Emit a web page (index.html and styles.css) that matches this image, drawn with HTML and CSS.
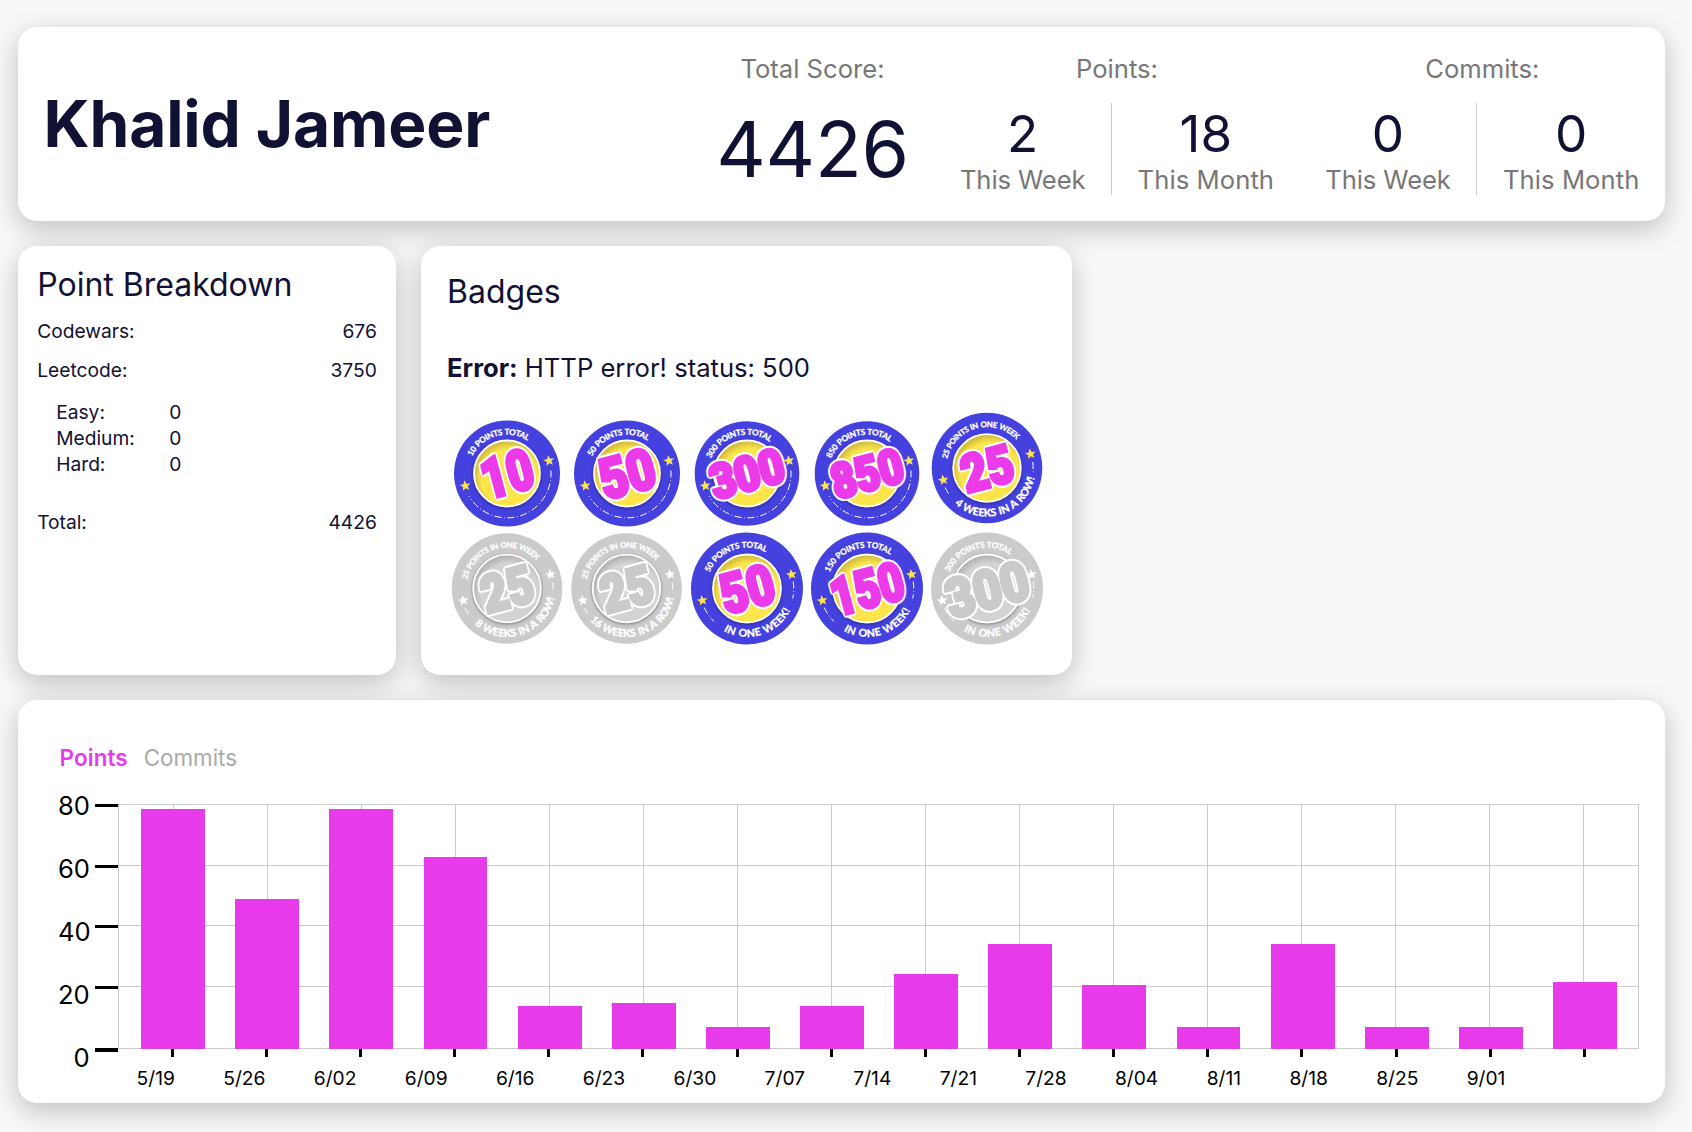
FILE: index.html
```
<!DOCTYPE html>
<html lang="en">
<head>
<meta charset="utf-8">
<title>Khalid Jameer</title>
<link rel="stylesheet" href="styles.css">
</head>
<body>
<svg class="defs" width="0" height="0" aria-hidden="true">
  <defs>
    <path id="arc-top" d="M-38.8 0A38.8 38.8 0 0 1 38.8 0"/>
    <path id="arc-top-lg" d="M-40.8 0A40.8 40.8 0 0 1 40.8 0"/>
    <path id="arc-bottom" d="M-48.5 0A48.5 48.5 0 0 0 48.5 0"/>
    <path id="star" d="M0 -5.6L1.5 -1.8L5.4 -1.7L2.3 .8L3.3 4.5L0 2.4L-3.3 4.5L-2.3 .8L-5.4 -1.7L-1.5 -1.8Z"/>
    <radialGradient id="sun" cx="0.54" cy="0.56" r="0.54">
      <stop offset="0.8" stop-color="#fce54b"/>
      <stop offset="1" stop-color="#d4bd3c"/>
    </radialGradient>
    <radialGradient id="moon" cx="0.54" cy="0.56" r="0.54">
      <stop offset="0.8" stop-color="#d3d3d3"/>
      <stop offset="1" stop-color="#b4b4b4"/>
    </radialGradient>
    <g id="dashes-total"><path d="M43.9 -3A44 44 0 0 1 -38 22.5"/></g>
    <g id="dashes-row"><path d="M45.8 -6A46 46 0 0 1 45.9 4"/><path d="M-42 19.5A46 46 0 0 0 -37 27.5"/></g>
    <g id="dashes-week"><path d="M46.2 -7A46.7 46.7 0 0 1 45.7 10"/><path d="M-42.8 19A46.7 46.7 0 0 0 -33 33"/></g>
  </defs>
</svg>
<main class="dashboard">
  <header class="card summary">
    <h1 class="name">Khalid Jameer</h1>
    <section class="stat">
      <p class="label">Total Score:</p>
      <p class="score">4426</p>
    </section>
    <section class="stat">
      <p class="label">Points:</p>
      <div class="periods">
        <div class="period"><span class="count">2</span><span class="label">This Week</span></div>
        <div class="period"><span class="count">18</span><span class="label">This Month</span></div>
      </div>
    </section>
    <section class="stat">
      <p class="label">Commits:</p>
      <div class="periods">
        <div class="period"><span class="count">0</span><span class="label">This Week</span></div>
        <div class="period"><span class="count">0</span><span class="label">This Month</span></div>
      </div>
    </section>
  </header>

  <div class="middle">
    <section class="card breakdown">
      <h2>Point Breakdown</h2>
      <div class="line"><span>Codewars:</span><span>676</span></div>
      <div class="line"><span>Leetcode:</span><span>3750</span></div>
      <div class="levels">
        <span>Easy:</span><span>0</span>
        <span>Medium:</span><span>0</span>
        <span>Hard:</span><span>0</span>
      </div>
      <div class="line"><span>Total:</span><span>4426</span></div>
    </section>

    <section class="card badges">
      <h2>Badges</h2>
      <p class="error"><strong>Error:</strong> HTTP error! status: 500</p>
      <div class="badge-grid">
        <svg class="badge" viewBox="-60 -57.5 120 115">
          <circle class="disc" r="53"/><circle class="core" r="33"/>
          <text class="ring"><textPath href="#arc-top" startOffset="17.5" textLength="65">10 POINTS TOTAL</textPath></text>
          <use class="star" href="#star" transform="translate(42 -12.7) rotate(-10)"/><use class="star" href="#star" transform="translate(-41.7 12.3) rotate(-10)"/>
          <use class="dashes" href="#dashes-total"/>
          <g transform="rotate(-15)"><text class="num edge" x="-26" y="20" font-size="56" textLength="52" lengthAdjust="spacingAndGlyphs">10</text><text class="num" x="-26" y="20" font-size="56" textLength="52" lengthAdjust="spacingAndGlyphs">10</text></g>
        </svg>
        <svg class="badge" viewBox="-60 -57.5 120 115">
          <circle class="disc" r="53"/><circle class="core" r="33"/>
          <text class="ring"><textPath href="#arc-top" startOffset="17.5" textLength="65">50 POINTS TOTAL</textPath></text>
          <use class="star" href="#star" transform="translate(42 -12.7) rotate(-10)"/><use class="star" href="#star" transform="translate(-41.7 12.3) rotate(-10)"/>
          <use class="dashes" href="#dashes-total"/>
          <g transform="rotate(-15)"><text class="num edge" x="-28" y="20" font-size="56" textLength="56" lengthAdjust="spacingAndGlyphs">50</text><text class="num" x="-28" y="20" font-size="56" textLength="56" lengthAdjust="spacingAndGlyphs">50</text></g>
        </svg>
        <svg class="badge" viewBox="-60 -57.5 120 115">
          <circle class="disc" r="52.3"/><circle class="core" r="33"/>
          <text class="ring"><textPath href="#arc-top" startOffset="15.3" textLength="70">300 POINTS TOTAL</textPath></text>
          <use class="star" href="#star" transform="translate(42 -12.7) rotate(-10)"/><use class="star" href="#star" transform="translate(-41.7 12.3) rotate(-10)"/>
          <use class="dashes" href="#dashes-total"/>
          <g transform="rotate(-15)"><text class="num edge" x="-37.5" y="17" font-size="48" textLength="75" lengthAdjust="spacingAndGlyphs">300</text><text class="num" x="-37.5" y="17" font-size="48" textLength="75" lengthAdjust="spacingAndGlyphs">300</text></g>
        </svg>
        <svg class="badge" viewBox="-60 -57.5 120 115">
          <circle class="disc" r="52.3"/><circle class="core" r="33"/>
          <text class="ring"><textPath href="#arc-top" startOffset="15.3" textLength="70">850 POINTS TOTAL</textPath></text>
          <use class="star" href="#star" transform="translate(42 -12.7) rotate(-10)"/><use class="star" href="#star" transform="translate(-41.7 12.3) rotate(-10)"/>
          <use class="dashes" href="#dashes-total"/>
          <g transform="rotate(-15)"><text class="num edge" x="-36.5" y="17" font-size="48" textLength="73" lengthAdjust="spacingAndGlyphs">850</text><text class="num" x="-36.5" y="17" font-size="48" textLength="73" lengthAdjust="spacingAndGlyphs">850</text></g>
        </svg>
        <svg class="badge" viewBox="-60 -52 120 115">
          <circle class="disc" r="55.3"/><circle class="core" r="33.8"/>
          <text class="ring small"><textPath href="#arc-top-lg" startOffset="9" textLength="88">25 POINTS IN ONE WEEK</textPath></text>
          <text class="ring big"><textPath href="#arc-bottom" startOffset="40.5" textLength="102">4 WEEKS IN A ROW!</textPath></text>
          <use class="star" href="#star" transform="translate(43.5 -14) rotate(-10)"/><use class="star" href="#star" transform="translate(-43.7 12) rotate(-10)"/>
          <use class="dashes" href="#dashes-row"/>
          <g transform="rotate(-15)"><text class="num edge" x="-26" y="19" font-size="52" textLength="52" lengthAdjust="spacingAndGlyphs">25</text><text class="num" x="-26" y="19" font-size="52" textLength="52" lengthAdjust="spacingAndGlyphs">25</text></g>
        </svg>
        <svg class="badge locked" viewBox="-60 -57.5 120 115">
          <circle class="disc" r="55.3"/><circle class="core" r="33.8"/>
          <text class="ring small"><textPath href="#arc-top-lg" startOffset="9" textLength="88">25 POINTS IN ONE WEEK</textPath></text>
          <text class="ring big"><textPath href="#arc-bottom" startOffset="40.5" textLength="102">8 WEEKS IN A ROW!</textPath></text>
          <use class="star" href="#star" transform="translate(43.5 -14) rotate(-10)"/><use class="star" href="#star" transform="translate(-43.7 12) rotate(-10)"/>
          <use class="dashes" href="#dashes-row"/>
          <g transform="rotate(-15)"><text class="num edge" x="-26" y="19" font-size="52" textLength="52" lengthAdjust="spacingAndGlyphs">25</text><text class="num" x="-26" y="19" font-size="52" textLength="52" lengthAdjust="spacingAndGlyphs">25</text></g>
        </svg>
        <svg class="badge locked" viewBox="-59.5 -57.5 120 115">
          <circle class="disc" r="55.3"/><circle class="core" r="33.8"/>
          <text class="ring small"><textPath href="#arc-top-lg" startOffset="9" textLength="88">25 POINTS IN ONE WEEK</textPath></text>
          <text class="ring big"><textPath href="#arc-bottom" startOffset="34.5" textLength="108">16 WEEKS IN A ROW!</textPath></text>
          <use class="star" href="#star" transform="translate(43.5 -14) rotate(-10)"/><use class="star" href="#star" transform="translate(-43.7 12) rotate(-10)"/>
          <use class="dashes" href="#dashes-row"/>
          <g transform="rotate(-15)"><text class="num edge" x="-26" y="19" font-size="52" textLength="52" lengthAdjust="spacingAndGlyphs">25</text><text class="num" x="-26" y="19" font-size="52" textLength="52" lengthAdjust="spacingAndGlyphs">25</text></g>
        </svg>
        <svg class="badge" viewBox="-60 -57.5 120 115">
          <circle class="disc" r="56"/><circle class="core" r="34"/>
          <text class="ring"><textPath href="#arc-top-lg" startOffset="16.5" textLength="67">50 POINTS TOTAL</textPath></text>
          <text class="ring big"><textPath href="#arc-bottom" startOffset="51.5" textLength="78">IN ONE WEEK!</textPath></text>
          <use class="star" href="#star" transform="translate(44.5 -14) rotate(-10)"/><use class="star" href="#star" transform="translate(-44.7 12) rotate(-10)"/>
          <use class="dashes" href="#dashes-week"/>
          <g transform="rotate(-15)"><text class="num edge" x="-27" y="20" font-size="55" textLength="54" lengthAdjust="spacingAndGlyphs">50</text><text class="num" x="-27" y="20" font-size="55" textLength="54" lengthAdjust="spacingAndGlyphs">50</text></g>
        </svg>
        <svg class="badge" viewBox="-60 -57.5 120 115">
          <circle class="disc" r="56"/><circle class="core" r="34"/>
          <text class="ring"><textPath href="#arc-top-lg" startOffset="16.5" textLength="72">150 POINTS TOTAL</textPath></text>
          <text class="ring big"><textPath href="#arc-bottom" startOffset="51.5" textLength="78">IN ONE WEEK!</textPath></text>
          <use class="star" href="#star" transform="translate(44.5 -14) rotate(-10)"/><use class="star" href="#star" transform="translate(-44.7 12) rotate(-10)"/>
          <use class="dashes" href="#dashes-week"/>
          <g transform="rotate(-15)"><text class="num edge" x="-37" y="19" font-size="53" textLength="74" lengthAdjust="spacingAndGlyphs">150</text><text class="num" x="-37" y="19" font-size="53" textLength="74" lengthAdjust="spacingAndGlyphs">150</text></g>
        </svg>
        <svg class="badge locked" viewBox="-60 -57.5 120 115">
          <circle class="disc" r="56"/><circle class="core" r="34"/>
          <text class="ring"><textPath href="#arc-top-lg" startOffset="16.5" textLength="72">300 POINTS TOTAL</textPath></text>
          <text class="ring big"><textPath href="#arc-bottom" startOffset="51.5" textLength="78">IN ONE WEEK!</textPath></text>
          <use class="star" href="#star" transform="translate(44.5 -14) rotate(-10)"/><use class="star" href="#star" transform="translate(-44.7 12) rotate(-10)"/>
          <use class="dashes" href="#dashes-week"/>
          <g transform="rotate(-15)"><text class="num edge" x="-42" y="20" font-size="54" textLength="84" lengthAdjust="spacingAndGlyphs">300</text><text class="num" x="-42" y="20" font-size="54" textLength="84" lengthAdjust="spacingAndGlyphs">300</text></g>
        </svg>
      </div>
    </section>
  </div>

  <section class="card history">
    <nav class="tabs"><span class="tab active">Points</span><span class="tab">Commits</span></nav>
    <div class="chart">
      <div class="y-axis"><span>80</span><span>60</span><span>40</span><span>20</span><span>0</span></div>
      <svg class="plot" width="1544" height="253" viewBox="95 804 1544 253" shape-rendering="crispEdges">
        <path class="grid" d="M118 804.5H1639M118 865.5H1639M118 925.5H1639M118 986.5H1639M118 1048.5H1639M118.5 804V1049M173.5 804V1049M267.5 804V1049M361.5 804V1049M455.5 804V1049M549.5 804V1049M643.5 804V1049M737.5 804V1049M831.5 804V1049M925.5 804V1049M1019.5 804V1049M1113.5 804V1049M1207.5 804V1049M1301.5 804V1049M1395.5 804V1049M1489.5 804V1049M1583.5 804V1049M1638.5 804V1049"/>
        <g class="bars">
          <rect x="141" y="809" width="64" height="240"/><rect x="235" y="899" width="64" height="150"/>
          <rect x="329" y="809" width="64" height="240"/><rect x="424" y="857" width="63" height="192"/>
          <rect x="518" y="1006" width="64" height="43"/><rect x="612" y="1003" width="64" height="46"/>
          <rect x="706" y="1027" width="64" height="22"/><rect x="800" y="1006" width="64" height="43"/>
          <rect x="894" y="974" width="64" height="75"/><rect x="988" y="944" width="64" height="105"/>
          <rect x="1082" y="985" width="64" height="64"/><rect x="1177" y="1027" width="63" height="22"/>
          <rect x="1271" y="944" width="64" height="105"/><rect x="1365" y="1027" width="64" height="22"/>
          <rect x="1459" y="1027" width="64" height="22"/><rect x="1553" y="982" width="64" height="67"/>
        </g>
        <path class="ticks" d="M95 804h23v3h-23zM95 865h23v3h-23zM95 925h23v3h-23zM95 986h23v3h-23zM95 1048h23v4h-23zM171 1049h3v8h-3zM265 1049h3v8h-3zM359 1049h3v8h-3zM453 1049h3v8h-3zM547 1049h3v8h-3zM641 1049h3v8h-3zM736 1049h3v8h-3zM830 1049h3v8h-3zM924 1049h3v8h-3zM1018 1049h3v8h-3zM1112 1049h3v8h-3zM1206 1049h3v8h-3zM1300 1049h3v8h-3zM1395 1049h3v8h-3zM1489 1049h3v8h-3zM1583 1049h3v8h-3z"/>
      </svg>
    </div>
    <div class="x-axis"><span>5/19</span><span>5/26</span><span>6/02</span><span>6/09</span><span>6/16</span><span>6/23</span><span>6/30</span><span>7/07</span><span>7/14</span><span>7/21</span><span>7/28</span><span>8/04</span><span>8/11</span><span>8/18</span><span>8/25</span><span>9/01</span></div>
  </section>
</main>
</body>
</html>
```
FILE: styles.css
```
* { box-sizing: border-box; }
body {
  margin: 0;
  background: #f8f8fb;
  color: #111133;
  font-family: Inter, "Liberation Sans", sans-serif;
}
h1, h2, p { margin: 0; }
.defs { position: absolute; }

.dashboard {
  display: flex;
  flex-direction: column;
  gap: 25px;
  width: 1665px;
  height: 1132px;
  padding: 27px 0 29px 18px;
}
.card {
  background: #fff;
  border-radius: 19.2px;
  box-shadow: 0 8px 28px rgba(0, 0, 0, 0.23);
}

/* summary */
.summary {
  display: flex;
  gap: 51.2px;
  height: 194px;
  padding: 25.6px;
}
.name {
  flex: 1;
  align-self: center;
  margin-top: -2px;
  font-size: 64px;
  line-height: 77px;
  font-weight: 700;
  letter-spacing: -0.15px;
}
.stat {
  display: flex;
  flex-direction: column;
  align-items: center;
  gap: 19px;
}
.label {
  color: #777;
  font-size: 25.6px;
  line-height: 31px;
}
.period:first-child .label { letter-spacing: -0.1px; }
.period:last-child .label { letter-spacing: 0.08px; }
.score {
  font-size: 76.8px;
  line-height: 93px;
  letter-spacing: -0.3px;
}
.periods { display: flex; height: 92px; }
.period {
  display: flex;
  flex-direction: column;
  align-items: center;
}
.period:first-child {
  padding-right: 25.6px;
  border-right: 1px solid #ccc;
}
.period:last-child { padding-left: 25.6px; }
.count {
  font-size: 51.2px;
  line-height: 61px;
}

/* middle row */
.middle {
  display: flex;
  gap: 25px;
  height: 429px;
}
h2 {
  font-size: 32px;
  line-height: 39px;
  font-weight: 400;
}
.breakdown {
  width: 378px;
  padding: 19px 19.2px;
  font-size: 19.2px;
}
.line {
  display: flex;
  justify-content: space-between;
  height: 39px;
  line-height: 23px;
  padding-top: 16px;
}
.levels {
  display: grid;
  grid-template-columns: 113px auto;
  justify-content: start;
  padding: 17px 0 18px 19px;
  line-height: 26px;
}
.badges {
  width: 651px;
  padding: 26px 26px 0;
}
.error {
  margin-top: 41px;
  font-size: 25.6px;
  line-height: 31px;
}
.badge-grid {
  display: grid;
  grid-template-columns: repeat(5, 120px);
  grid-auto-rows: 114.5px;
  margin-top: 33px;
}

/* badges */
.badge { width: 120px; height: 115px; overflow: visible; }
.disc { fill: #4441df; }
.core {
  fill: url(#sun);
  stroke: #fff;
  stroke-width: 1.8px;
  filter: drop-shadow(0 1px 1.5px rgba(0, 0, 0, 0.4));
}
.star { fill: #fce54b; }
.dashes {
  fill: none;
  stroke: #fff;
  stroke-width: 1px;
  stroke-dasharray: 7 2.5 1 2.5;
}
.ring {
  fill: #fff;
  stroke: #fff;
  stroke-width: 0.2px;
  font: 900 8.3px Lato, sans-serif;
  word-spacing: 0.8px;
}
.ring.small { font-size: 7.9px; }
.ring.big { font-size: 10.6px; }
.num {
  fill: #eb3be9;
  stroke: #eb3be9;
  stroke-width: 3.8px;
  font-family: Roboto, sans-serif;
  font-weight: 900;
}
.num.edge {
  stroke: #fff;
  stroke-width: 8px;
  stroke-linejoin: round;
}
.locked .disc { fill: #cbcbcb; }
.locked .core { fill: url(#moon); }
.locked .star { fill: #fff; }
.locked .num { fill: #cacaca; stroke: #cacaca; }
.locked .num.edge { stroke: #fff; }

/* history chart */
.history {
  height: 403px;
  padding: 44px 26px 0 40px;
}
.tabs {
  display: flex;
  gap: 16px;
  padding-left: 1.6px;
  font-size: 22.4px;
  line-height: 28px;
}
.tab { color: #aaa; }
.tab.active { color: #e73be9; font-weight: 600; letter-spacing: 0.1px; }
.chart { display: flex; padding-top: 32px; }
.y-axis {
  display: flex;
  flex-direction: column;
  width: 37px;
  height: 253px;
  margin-top: -14.5px;
  padding-right: 5.4px;
  color: #000;
  font-size: 25.6px;
  line-height: 31px;
  text-align: right;
}
.y-axis span { flex: 0 0 63px; height: 63px; line-height: 31px; }
.plot { display: block; }
.grid { fill: none; stroke: #ccc; }
.bars { fill: #e73be9; }
.ticks { fill: #000; }
.x-axis {
  display: flex;
  gap: 48.35px;
  padding: 10px 0 0 78.6px;
  color: #000;
  font-size: 19.2px;
  line-height: 23px;
}
```
